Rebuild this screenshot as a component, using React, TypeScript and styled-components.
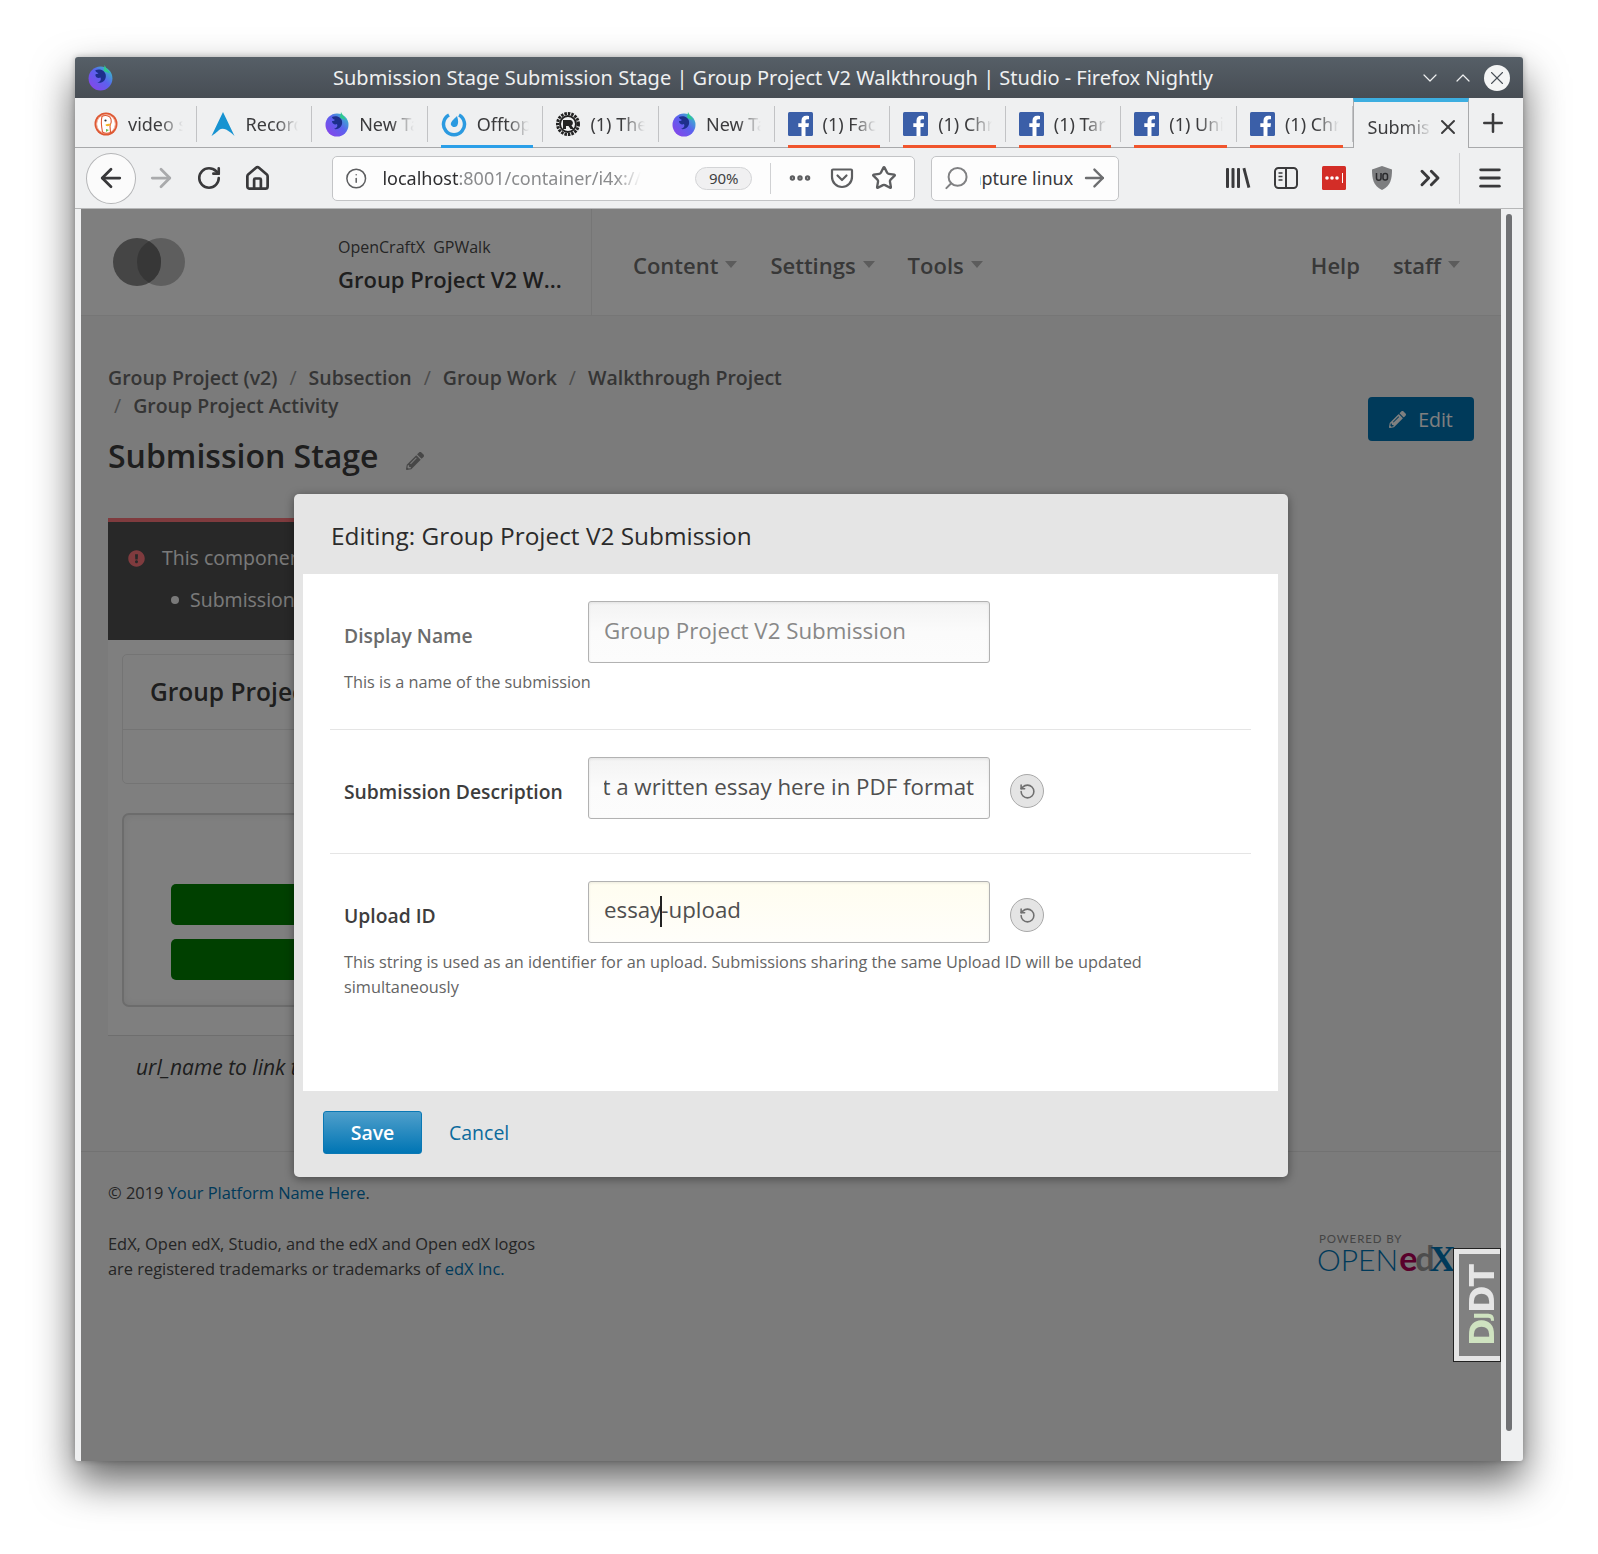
import React from 'react';
import styled, { createGlobalStyle } from 'styled-components';
import {
  ArrowLeft,
  ArrowRight,
  ChevronDown,
  ChevronUp,
  ChevronsRight,
  Ellipsis,
  House,
  Info,
  Menu,
  Plus,
  RotateCcw,
  RotateCw,
  Search,
  Star,
  X,
} from 'lucide-react';
import { FaExclamationCircle, FaPencilAlt } from 'react-icons/fa';

const GlobalStyle = createGlobalStyle`
  html, body {
    margin: 0;
    padding: 0;
    background: #fff;
  }
  * {
    box-sizing: border-box;
  }
`;

const chromeFont = `"Noto Sans", "Open Sans", sans-serif`;
const pageFont = `"Open Sans", "Noto Sans", sans-serif`;

/* ---------- browser chrome ---------- */

const Stage = styled.div`
  width: 1598px;
  height: 1554px;
  padding: 57px 75px 0;
  background: #fff;
  overflow: hidden;
`;

const Browser = styled.div`
  width: 1448px;
  height: 1404px;
  display: flex;
  flex-direction: column;
  background: #eff0f1;
  border-radius: 3px;
  box-shadow: 0 20px 42px rgba(0, 0, 0, 0.62), 0 0 6px rgba(0, 0, 0, 0.25);
  overflow: hidden;
`;

const TitleBar = styled.div`
  height: 41px;
  flex: none;
  display: flex;
  align-items: center;
  padding: 0 13px;
  background: linear-gradient(#565f67, #474d54);
  color: #eff0f1;
  font: 400 20px/41px ${chromeFont};
`;

const TitleText = styled.div`
  flex: 1;
  text-align: center;
  white-space: nowrap;
  padding-left: 20px;
`;

const WindowControl = styled.span`
  width: 33px;
  display: flex;
  justify-content: center;
  color: #eff0f1;
`;

const CloseControl = styled.span`
  width: 26px;
  height: 26px;
  margin-left: 5px;
  border-radius: 50%;
  background: #f4f5f5;
  color: #4a5057;
  display: flex;
  align-items: center;
  justify-content: center;
`;

const TabStrip = styled.div`
  height: 50px;
  flex: none;
  display: flex;
  padding-left: 6px;
  border-bottom: 1px solid #a8a9ab;
  font: 400 18px/24px ${chromeFont};
  color: #3b3b3d;
`;

const Tab = styled.div<{ $accent?: string; $last?: boolean }>`
  position: relative;
  width: 115.6px;
  flex: none;
  padding: 8px 0 5px;

  &::after {
    content: '';
    display: ${({ $accent }) => ($accent ? 'block' : 'none')};
    position: absolute;
    left: 13px;
    right: 10px;
    bottom: -1px;
    height: 3px;
    background: ${({ $accent }) => $accent};
  }
`;

const TabInner = styled.div<{ $last?: boolean }>`
  height: 36px;
  display: flex;
  align-items: center;
  gap: 10px;
  padding: 0 13px;
  border-right: ${({ $last }) => ($last ? 'none' : '1px solid #c2c3c5')};
`;

const TabLabel = styled.span`
  flex: 1;
  overflow: hidden;
  white-space: nowrap;
  -webkit-mask-image: linear-gradient(to right, #000 58%, transparent 100%);
  mask-image: linear-gradient(to right, #000 58%, transparent 100%);
`;

const ActiveTab = styled.div`
  width: 116px;
  height: 50px;
  flex: none;
  margin-left: 0;
  display: flex;
  align-items: center;
  gap: 4px;
  padding: 3px 8px 0 14px;
  border-top: 4px solid #3daee0;
  border-left: 1px solid #a8a9ab;
  border-right: 1px solid #a8a9ab;
  background: #eff0f1;
`;

const NewTab = styled.div`
  flex: 1;
  display: flex;
  align-items: center;
  justify-content: center;
  padding-right: 6px;
  color: #3b3b3d;
`;

const Toolbar = styled.div`
  height: 61px;
  flex: none;
  display: flex;
  align-items: center;
  padding-left: 11px;
  border-bottom: 1px solid #b6b7b8;
  color: #39393b;
`;

const BackButton = styled.div`
  width: 50px;
  height: 51px;
  margin-right: 1px;
  border-radius: 50%;
  border: 1px solid #b4b5b7;
  background: #fbfbfb;
  display: flex;
  align-items: center;
  justify-content: center;
`;

const ToolButton = styled.div<{ $muted?: boolean }>`
  width: 48px;
  flex: none;
  display: flex;
  align-items: center;
  justify-content: center;
  color: ${({ $muted }) => ($muted ? '#a9aaac' : 'inherit')};
`;

const UrlBar = styled.div`
  width: 583px;
  height: 45px;
  margin-left: 51px;
  padding: 0 9px 0 12px;
  display: flex;
  align-items: center;
  background: #fdfdfd;
  border: 1px solid #c3c4c6;
  border-radius: 5px;
  font: 400 18px/24px ${chromeFont};
  color: #8a8b8d;
`;

const UrlText = styled.div`
  width: 266px;
  margin-left: 15px;
  overflow: hidden;
  white-space: nowrap;
  -webkit-mask-image: linear-gradient(to right, #000 90%, transparent 100%);
  mask-image: linear-gradient(to right, #000 90%, transparent 100%);

  b {
    font-weight: 400;
    color: #2e2e30;
  }
`;

const ZoomPill = styled.span`
  width: 58px;
  height: 23px;
  margin-left: 54px;
  border: 1px solid #d3d4d6;
  border-radius: 12px;
  background: #f0f0f1;
  color: #3f3f41;
  font-size: 15px;
  line-height: 21px;
  text-align: center;
`;

const BarDivider = styled.span`
  width: 1px;
  height: 31px;
  margin: 0 8px 0 18px;
  background: #d0d1d3;
`;

const UrlAction = styled.span`
  width: 42px;
  flex: none;
  display: flex;
  align-items: center;
  justify-content: center;
  color: #5d5e60;
`;

const SearchBar = styled.div`
  width: 188px;
  height: 45px;
  margin-left: 16px;
  padding: 0 9px 0 11px;
  display: flex;
  align-items: center;
  background: #fdfdfd;
  border: 1px solid #c3c4c6;
  border-radius: 5px;
  font: 400 18px/24px ${chromeFont};
  color: #39393b;
`;

const SearchText = styled.div`
  width: 97px;
  margin-left: 10px;
  overflow: hidden;
  white-space: nowrap;
  display: flex;
  justify-content: flex-end;
`;

const ToolGroup = styled.div`
  margin-left: 95px;
  display: flex;
  align-items: center;
`;

const MenuButton = styled.div`
  width: 60px;
  height: 51px;
  margin-left: 5px;
  border-left: 1px solid #cfd0d2;
  display: flex;
  align-items: center;
  justify-content: center;
`;

const ContentRow = styled.div`
  flex: 1;
  min-height: 0;
  display: flex;
  padding: 0 6px;
`;

const Viewport = styled.div`
  position: relative;
  width: 1420px;
  height: 100%;
  flex: none;
  overflow: hidden;
  background: #f6f6f6;
`;

const ScrollTrack = styled.div`
  flex: 1;
  padding: 5px 5px 30px;
`;

const ScrollThumb = styled.div`
  height: 100%;
  border-radius: 3px;
  background: #707174;
`;

/* ---------- studio page, beneath the scrim ---------- */

const PageHeader = styled.header`
  height: 107px;
  display: flex;
  background: #ffffff;
  border-bottom: 1px solid #ececec;
  font-family: ${pageFont};
`;

const Brand = styled.div`
  width: 511px;
  flex: none;
  display: flex;
  align-items: center;
  padding: 0 0 0 32px;
  border-right: 1px solid #ececec;
`;

const CourseInfo = styled.div`
  margin-left: 153px;
  padding-top: 5px;
`;

const CourseOrg = styled.div`
  font-size: 16px;
  line-height: 22px;
  color: #4a4a4a;
`;

const CourseName = styled.div`
  margin-top: 6px;
  font-size: 22px;
  line-height: 30px;
  font-weight: 600;
  color: #3c3c3c;
  white-space: nowrap;
`;

const NavBar = styled.nav`
  flex: 1;
  display: flex;
  align-items: center;
  gap: 33px;
  padding: 6px 41px 0 41px;
  color: #707070;
  font-size: 22px;
  font-weight: 600;
`;

const NavItem = styled.span<{ $pushed?: boolean }>`
  display: flex;
  align-items: center;
  gap: 7px;
  margin-left: ${({ $pushed }) => ($pushed ? 'auto' : '0')};
`;

const Caret = styled.i`
  width: 0;
  height: 0;
  margin-top: -2px;
  border-left: 6px solid transparent;
  border-right: 6px solid transparent;
  border-top: 7px solid #b8b8b8;
`;

const PageBody = styled.main`
  height: 835px;
  padding: 48px 27px 0;
  font-family: ${pageFont};
`;

const TitleRow = styled.div`
  display: flex;
  justify-content: space-between;
  align-items: flex-start;
`;

const Crumbs = styled.div`
  width: 700px;
  font-size: 19.5px;
  line-height: 28px;
  font-weight: 600;
  color: #6a6a6a;
`;

const CrumbSlash = styled.span`
  margin: 0 12px;
  font-weight: 400;
  color: #999;
`;

const CrumbLead = styled.span`
  margin: 0 12px 0 6px;
  font-weight: 400;
  color: #999;
`;

const PageTitle = styled.h1`
  margin: 14px 0 0;
  display: flex;
  align-items: center;
  gap: 27px;
  font-size: 32px;
  line-height: 44px;
  font-weight: 600;
  color: #3c3c3c;

  svg {
    margin-top: 9px;
    color: #8f8f8f;
  }
`;

const EditButton = styled.div`
  width: 106px;
  height: 44px;
  margin-top: 33px;
  display: flex;
  align-items: center;
  justify-content: center;
  gap: 12px;
  border-radius: 4px;
  background: #0075b4;
  color: #fff;
  font-size: 19.5px;
`;

const Column = styled.div`
  width: 1130px;
  margin-top: 40px;
`;

const Alert = styled.div`
  height: 122px;
  padding: 20px 20px 0;
  border-top: 4px solid #ff767c;
  background: #505050;
  color: #f5f5f5;
  font-size: 19.5px;
  line-height: 32px;
`;

const AlertLine = styled.div`
  display: flex;
  align-items: center;
  gap: 17px;
  color: #ff767c;

  span {
    color: #f5f5f5;
  }
`;

const AlertItem = styled.div`
  display: flex;
  align-items: center;
  gap: 11px;
  margin: 10px 0 0 43px;

  &::before {
    content: '';
    width: 8px;
    height: 8px;
    border-radius: 50%;
    background: #f5f5f5;
  }
`;

const Block = styled.div`
  padding: 14px 14px 0;
  background: #fff;
  height: 396px;
  border-bottom: 1px solid #ddd;
`;

const Card = styled.div`
  height: 130px;
  border: 1px solid #e8e8e8;
  border-radius: 5px;
`;

const CardHead = styled.div`
  height: 75px;
  padding-left: 27px;
  border-bottom: 1px solid #e8e8e8;
  font-size: 24.5px;
  line-height: 74px;
  font-weight: 600;
  color: #3c3c3c;
`;

const ActionBox = styled.div`
  height: 194px;
  margin-top: 29px;
  padding: 69px 47px 0;
  border: 2px solid #d8d8d8;
  border-radius: 7px;
  box-shadow: inset 0 0 8px rgba(0, 0, 0, 0.08);
`;

const GreenButton = styled.div`
  height: 41px;
  margin-bottom: 14px;
  border-radius: 5px;
  background: #008000;
  color: #fff;
  font-size: 19.5px;
  font-weight: 600;
  line-height: 40px;
  text-align: center;
`;

const UrlNote = styled.div`
  padding: 15px 0 0 28px;
  font-size: 21px;
  line-height: 32px;
  font-style: italic;
  color: #3c3c3c;
`;

const PageFooter = styled.footer`
  display: flex;
  justify-content: space-between;
  padding: 28px 34px 0 27px;
  background: #f6f6f6;
  border-top: 1px solid #e4e4e4;
  font-family: ${pageFont};
  font-size: 16.4px;
  line-height: 25px;
  color: #4a4a4a;

  a {
    color: #0075b4;
    text-decoration: none;
  }
`;

const FooterNote = styled.p`
  margin: 0 0 26px;
`;

const PoweredLogo = styled.div`
  width: 150px;
  margin-top: 53px;
`;

const PoweredBy = styled.div`
  margin-left: 2px;
  font: 400 11.5px/12px Lato, sans-serif;
  letter-spacing: 0.9px;
  color: #8a8a8a;
`;

const LogoWord = styled.div`
  display: flex;
  align-items: baseline;
  height: 26px;
  font: 300 30px/26px Lato, sans-serif;
  color: #0075b4;
  white-space: nowrap;
`;

const LogoE = styled.span`
  margin-left: 1px;
  font-weight: 700;
  font-size: 34px;
  color: #b20056;
`;

const LogoD = styled.span`
  margin-left: -2px;
  font-weight: 700;
  font-size: 34px;
  color: #9a9a9a;
`;

const LogoX = styled.span`
  margin-left: -5px;
  font-family: 'Liberation Serif', serif;
  font-weight: 700;
  font-size: 36px;
  color: #0075b4;
`;

const Scrim = styled.div`
  position: absolute;
  inset: 0;
  background: rgba(0, 0, 0, 0.5);
`;

const DebugHandle = styled.div`
  position: absolute;
  top: 1039px;
  right: 0;
  width: 48px;
  height: 114px;
  padding: 5px 0 5px 5px;
  display: flex;
  align-items: center;
  justify-content: center;
  outline: 1px solid #222;
  outline-offset: -1px;
  border-style: solid;
  border-color: #e5e5e5;
  border-width: 6px 0 6px 6px;
  background: #808080;
  color: #e5e5e5;
  font: 700 33px/1 "DejaVu Sans", sans-serif;
  letter-spacing: -1px;
`;

const DebugText = styled.span`
  writing-mode: vertical-rl;
  transform: rotate(180deg);
  white-space: nowrap;

  em {
    font-style: normal;
    color: #cfe3c0;
  }
  small {
    font-size: 0.62em;
  }
`;

/* ---------- modal ---------- */

const Modal = styled.section`
  position: absolute;
  top: 285px;
  left: 213px;
  width: 994px;
  height: 683px;
  display: flex;
  flex-direction: column;
  border-radius: 5px;
  background: #e5e5e5;
  box-shadow: 0 2px 10px rgba(0, 0, 0, 0.4);
  font-family: ${pageFont};
`;

const ModalTitle = styled.h2`
  height: 80px;
  flex: none;
  margin: 0;
  padding-left: 37px;
  font-size: 24.4px;
  font-weight: 400;
  line-height: 84px;
  color: #2b2b2b;
`;

const ModalBody = styled.div`
  flex: 1;
  margin: 0 10px 0 9px;
  padding: 0 27px;
  background: #fff;
`;

const Setting = styled.div<{ $last?: boolean }>`
  padding: 27px 0 ${({ $last }) => ($last ? '0' : '34px')};
  border-bottom: ${({ $last }) => ($last ? 'none' : '1px solid #e5e5e5')};
`;

const SettingRow = styled.div`
  display: flex;
  align-items: center;
`;

const SettingLabel = styled.label<{ $modified?: boolean }>`
  width: 258px;
  flex: none;
  padding: 6px 0 0 14px;
  font-size: 19.3px;
  font-weight: 600;
  color: ${({ $modified }) => ($modified ? '#3d3d3d' : '#6b6b6b')};
`;

const Field = styled.div<{ $tone?: 'idle' | 'edited' | 'focus' }>`
  width: 402px;
  height: 62px;
  flex: none;
  padding: 0 15px 3px 15px;
  display: flex;
  align-items: center;
  border: 1px solid #b2b2b2;
  border-radius: 3px;
  font-size: 22.3px;
  white-space: nowrap;
  color: ${({ $tone }) => ($tone === 'idle' ? '#888' : '#4f4f4f')};
  background: ${({ $tone }) =>
    $tone === 'focus'
      ? 'linear-gradient(#fffdf0, #fffefa)'
      : 'linear-gradient(#f3f3f3, #fbfbfb 50%, #fcfcfc)'};
  box-shadow: inset 0 1px 3px rgba(0, 0, 0, 0.08);
`;

const ScrolledValue = styled.div`
  flex: 1;
  overflow: hidden;
  display: flex;
  justify-content: flex-end;
`;

const TextCaret = styled.i`
  display: inline-block;
  width: 2px;
  height: 31px;
  margin: 0 -1px;
  vertical-align: middle;
  background: #222;
`;

const ResetButton = styled.div`
  width: 34px;
  height: 34px;
  margin: 6px 0 0 20px;
  border: 1px solid #a9a9a9;
  border-radius: 50%;
  background: #e4e4e4;
  color: #6f6f6f;
  display: flex;
  align-items: center;
  justify-content: center;
`;

const HelpText = styled.div`
  margin-top: 7px;
  padding: 0 60px 0 14px;
  font-size: 16.3px;
  line-height: 25px;
  color: #646464;
`;

const ModalActions = styled.div`
  height: 86px;
  flex: none;
  display: flex;
  align-items: flex-start;
  padding: 20px 0 0 29px;
  font-size: 19.5px;
`;

const SaveButton = styled.div`
  width: 99px;
  height: 43px;
  border: 1px solid #0a78b4;
  border-radius: 3px;
  background: linear-gradient(#4f9fcb, #0075b4);
  color: #fff;
  font-weight: 600;
  line-height: 41px;
  text-align: center;
`;

const CancelLink = styled.a`
  margin-left: 27px;
  line-height: 43px;
  color: #0b6a9c;
`;

/* ---------- drawn icons ---------- */

const NightlyIcon = ({ size = 24 }: { size?: number }) => (
  <svg width={size} height={size + 2} viewBox="0 0 24 26">
    <defs>
      <linearGradient id="nightly" x1="0" y1="1" x2="1" y2="0">
        <stop offset="0" stopColor="#8f3fe8" />
        <stop offset="0.55" stopColor="#5a62ee" />
        <stop offset="1" stopColor="#2fd3c0" />
      </linearGradient>
    </defs>
    <ellipse cx="12" cy="14" rx="11.5" ry="11.5" fill="url(#nightly)" />
    <path d="M16 1c1 3 4 5 5 8l-6-2z" fill="#2fc98e" />
    <path d="M7 6c4-2 9 0 10 4 1 5-3 9-8 8 3-1 4-3 3-5-2 1-5 0-5-3 1 0 2 0 3-1-2-1-3-2-3-3z" fill="#1d2f8c" />
  </svg>
);

const DuckIcon = () => (
  <svg width="24" height="24" viewBox="0 0 24 24">
    <circle cx="12" cy="12" r="11.5" fill="#de5833" />
    <circle cx="12" cy="12" r="9.4" fill="#fff" stroke="#f3a78f" strokeWidth="1" />
    <path d="M8 4.5c3-2 8-1 9 2.5 1 3 0 5-1 7l.5 6.5c-2.500 1-5.500 1-8-.5-1-5-2-10-.5-15.500z" fill="#fff" stroke="#de5833" strokeWidth="1.100" />
    <path d="M11.500 12.500c2-1 4-1 5.500-.5-.5 1.500-2.500 2.500-5 2z" fill="#f4b52a" />
    <path d="M12 17l3 1-3 2z" fill="#67bd4a" />
    <circle cx="11.500" cy="8.500" r="1.100" fill="#333" />
  </svg>
);

const ArcIcon = () => (
  <svg width="26" height="26" viewBox="0 0 26 26">
    <path d="M13 1l11.500 24c-4-4-7.500-6-8.500-6.500-2.500-1-5-1-7 .5-1.500 1.500-5.500 5-7.500 6z" fill="#1793d1" />
  </svg>
);

const MattermostIcon = () => (
  <svg width="26" height="26" viewBox="0 0 26 26" fill="none">
    <path d="M8 4a10.500 10.500 0 1 0 10 0" stroke="#2b9ae0" strokeWidth="3.500" />
    <path d="M16 5c1 3 2 7 0 10-2 2-5 1-6-1-1-3 3-6 6-9z" fill="#2b9ae0" />
  </svg>
);

const RustIcon = () => (
  <svg width="24" height="24" viewBox="0 0 24 24">
    <circle cx="12" cy="12" r="10.500" fill="none" stroke="#222" strokeWidth="3" strokeDasharray="2.500 1" />
    <circle cx="12" cy="12" r="8" fill="none" stroke="#222" strokeWidth="2" />
    <path d="M7 8h7.500a3 3 0 0 1 1 5.500L18 17h-3.500l-2-3H10v3H7z" fill="#222" />
  </svg>
);

const FacebookIcon = () => (
  <svg width="25" height="24" viewBox="0 0 25 24">
    <rect width="25" height="24" rx="1.500" fill="#3b5fa8" />
    <path d="M17.500 24v-9h3l.5-3.700h-3.500V9c0-1 .4-1.800 1.900-1.800H21V3.900c-.4 0-1.500-.2-2.800-.2-2.800 0-4.700 1.700-4.700 4.800v2.800h-3.200V15h3.200v9z" fill="#fff" />
  </svg>
);

const PocketIcon = () => (
  <svg width="24" height="24" viewBox="0 0 24 24" fill="none" stroke="#5d5e60" strokeWidth="2.200">
    <path d="M3 3.500h18a1 1 0 0 1 1 1V11a10 10 0 0 1-20 0V4.500a1 1 0 0 1 1-1z" />
    <path d="M7.500 9.500l4.500 4.500 4.500-4.500" strokeLinecap="round" strokeLinejoin="round" />
  </svg>
);

const LibraryIcon = () => (
  <svg width="26" height="24" viewBox="0 0 26 24" fill="#3a3a3c">
    <rect x="1" y="2" width="3" height="20" rx="1" />
    <rect x="6.500" y="2" width="3" height="20" rx="1" />
    <rect x="12" y="2" width="3" height="20" rx="1" />
    <path d="M17.500 2.500l2.800-.8 5 19.500-2.800.8z" />
  </svg>
);

const SidebarIcon = () => (
  <svg width="24" height="24" viewBox="0 0 24 24" fill="none" stroke="#3a3a3c" strokeWidth="2">
    <rect x="1" y="2" width="22" height="20" rx="3.500" />
    <path d="M12 2v20" />
    <path d="M4.500 7h4M4.500 10.500h4M4.500 14h4" strokeWidth="1.500" />
  </svg>
);

const PasswordIcon = () => (
  <svg width="24" height="24" viewBox="0 0 24 24">
    <rect width="24" height="24" rx="1.500" fill="#d32d27" />
    <circle cx="5" cy="12" r="1.800" fill="#fff" />
    <circle cx="10" cy="12" r="1.800" fill="#fff" />
    <circle cx="15" cy="12" r="1.800" fill="#fff" />
    <rect x="20" y="7" width="1" height="10" fill="#fff" />
  </svg>
);

const ShieldIcon = () => (
  <svg width="22" height="26" viewBox="0 0 22 26">
    <path d="M11 1l10 3.500c0 9-1 16-10 20.500C2 20.500 1 13.500 1 4.500z" fill="#7d7e80" />
    <path d="M5.500 8v5a2 2 0 0 0 4.500 0V8" fill="none" stroke="#2a2a2c" strokeWidth="1.500" />
    <rect x="12" y="8.500" width="4.500" height="6.500" rx="2" fill="none" stroke="#2a2a2c" strokeWidth="1.500" />
  </svg>
);

const StudioLogo = () => (
  <svg width="72" height="48" viewBox="0 0 72 48">
    <circle cx="48" cy="24" r="24" fill="#bdbdbd" />
    <circle cx="24" cy="24" r="24" fill="#8b8b8b" />
    <path d="M36 3.200a24 24 0 0 1 0 41.600a24 24 0 0 1 0-41.600z" fill="#6f6f6f" />
  </svg>
);

const tabs = [
  { icon: <DuckIcon />, label: 'video s' },
  { icon: <ArcIcon />, label: 'Record' },
  { icon: <NightlyIcon />, label: 'New Ta' },
  { icon: <MattermostIcon />, label: 'Offtop', accent: '#2b9fe8' },
  { icon: <RustIcon />, label: '(1) The' },
  { icon: <NightlyIcon />, label: 'New Ta' },
  { icon: <FacebookIcon />, label: '(1) Fac', accent: '#f0552d' },
  { icon: <FacebookIcon />, label: '(1) Chr', accent: '#f0552d' },
  { icon: <FacebookIcon />, label: '(1) Tar', accent: '#f0552d' },
  { icon: <FacebookIcon />, label: '(1) Uni', accent: '#f0552d' },
  { icon: <FacebookIcon />, label: '(1) Chr', accent: '#f0552d' },
];

const App = () => {
  return (
    <Stage>
      <GlobalStyle />
      <Browser>
        <TitleBar>
          <NightlyIcon size={25} />
          <TitleText>
            Submission Stage Submission Stage | Group Project V2 Walkthrough | Studio - Firefox Nightly
          </TitleText>
          <WindowControl>
            <ChevronDown size={24} strokeWidth={1.2} />
          </WindowControl>
          <WindowControl>
            <ChevronUp size={24} strokeWidth={1.2} />
          </WindowControl>
          <CloseControl>
            <X size={22} strokeWidth={1.2} />
          </CloseControl>
        </TitleBar>

        <TabStrip>
          {tabs.map((tab, i) => (
            <Tab key={i} $accent={tab.accent}>
              <TabInner>
                {tab.icon}
                <TabLabel>{tab.label}</TabLabel>
              </TabInner>
            </Tab>
          ))}
          <ActiveTab>
            <TabLabel>Submis</TabLabel>
            <X size={24} strokeWidth={2} />
          </ActiveTab>
          <NewTab>
            <Plus size={30} strokeWidth={2} />
          </NewTab>
        </TabStrip>

        <Toolbar>
          <BackButton>
            <ArrowLeft size={30} strokeWidth={2.2} />
          </BackButton>
          <ToolButton $muted>
            <ArrowRight size={30} strokeWidth={2.2} />
          </ToolButton>
          <ToolButton>
            <RotateCw size={26} strokeWidth={2.4} />
          </ToolButton>
          <ToolButton>
            <House size={27} strokeWidth={2.4} />
          </ToolButton>
          <UrlBar>
            <Info size={23} strokeWidth={1.6} color="#5d5e60" />
            <UrlText>
              <b>localhost</b>:8001/container/i4x://(
            </UrlText>
            <ZoomPill>90%</ZoomPill>
            <BarDivider />
            <UrlAction>
              <Ellipsis size={26} strokeWidth={3} />
            </UrlAction>
            <UrlAction>
              <PocketIcon />
            </UrlAction>
            <UrlAction>
              <Star size={26} strokeWidth={2.2} />
            </UrlAction>
          </UrlBar>
          <SearchBar>
            <Search size={28} strokeWidth={1.8} color="#808183" style={{ transform: 'scaleX(-1)' }} />
            <SearchText>apture linux</SearchText>
            <ArrowRight size={30} strokeWidth={2} color="#6d6e70" style={{ marginLeft: 7 }} />
          </SearchBar>
          <ToolGroup>
            <ToolButton>
              <LibraryIcon />
            </ToolButton>
            <ToolButton>
              <SidebarIcon />
            </ToolButton>
            <ToolButton>
              <PasswordIcon />
            </ToolButton>
            <ToolButton>
              <ShieldIcon />
            </ToolButton>
            <ToolButton>
              <ChevronsRight size={32} strokeWidth={2.2} />
            </ToolButton>
            <MenuButton>
              <Menu size={28} strokeWidth={2.4} />
            </MenuButton>
          </ToolGroup>
        </Toolbar>

        <ContentRow>
          <Viewport>
            <PageHeader>
              <Brand>
                <StudioLogo />
                <CourseInfo>
                  <CourseOrg>OpenCraftX&nbsp; GPWalk</CourseOrg>
                  <CourseName>Group Project V2 W...</CourseName>
                </CourseInfo>
              </Brand>
              <NavBar>
                <NavItem>
                  Content <Caret />
                </NavItem>
                <NavItem>
                  Settings <Caret />
                </NavItem>
                <NavItem>
                  Tools <Caret />
                </NavItem>
                <NavItem $pushed>Help</NavItem>
                <NavItem>
                  staff <Caret />
                </NavItem>
              </NavBar>
            </PageHeader>

            <PageBody>
              <TitleRow>
                <div>
                  <Crumbs>
                    Group Project (v2)
                    <CrumbSlash>/</CrumbSlash>
                    Subsection
                    <CrumbSlash>/</CrumbSlash>
                    Group Work
                    <CrumbSlash>/</CrumbSlash>
                    Walkthrough Project
                    <br />
                    <CrumbLead>/</CrumbLead>
                    Group Project Activity
                  </Crumbs>
                  <PageTitle>
                    Submission Stage
                    <FaPencilAlt size={18} />
                  </PageTitle>
                </div>
                <EditButton>
                  <FaPencilAlt size={17} />
                  Edit
                </EditButton>
              </TitleRow>

              <Column>
                <Alert>
                  <AlertLine>
                    <FaExclamationCircle size={17} />
                    <span>This component has validation issues.</span>
                  </AlertLine>
                  <AlertItem>Submission</AlertItem>
                </Alert>
                <Block>
                  <Card>
                    <CardHead>Group Project</CardHead>
                  </Card>
                  <ActionBox>
                    <GreenButton>Hide</GreenButton>
                    <GreenButton>Project Navigator</GreenButton>
                  </ActionBox>
                </Block>
                <UrlNote>url_name to link to this stage</UrlNote>
              </Column>
            </PageBody>

            <PageFooter>
              <div>
                <FooterNote>
                  © 2019 <a>Your Platform Name Here</a>.
                </FooterNote>
                <FooterNote>
                  EdX, Open edX, Studio, and the edX and Open edX logos
                  <br />
                  are registered trademarks or trademarks of <a>edX Inc.</a>
                </FooterNote>
              </div>
              <PoweredLogo>
                <PoweredBy>POWERED BY</PoweredBy>
                <LogoWord>
                  OPEN
                  <LogoE>e</LogoE>
                  <LogoD>d</LogoD>
                  <LogoX>X</LogoX>
                </LogoWord>
              </PoweredLogo>
            </PageFooter>

            <Scrim />

            <DebugHandle>
              <DebugText>
                <em>
                  D<small>J</small>
                </em>
                DT
              </DebugText>
            </DebugHandle>

            <Modal>
              <ModalTitle>Editing: Group Project V2 Submission</ModalTitle>
              <ModalBody>
                <Setting>
                  <SettingRow>
                    <SettingLabel>Display Name</SettingLabel>
                    <Field $tone="idle">Group Project V2 Submission</Field>
                  </SettingRow>
                  <HelpText>This is a name of the submission</HelpText>
                </Setting>
                <Setting>
                  <SettingRow>
                    <SettingLabel $modified>Submission Description</SettingLabel>
                    <Field $tone="edited">
                      <ScrolledValue>Submit a written essay here in PDF format</ScrolledValue>
                    </Field>
                    <ResetButton>
                      <RotateCcw size={17} strokeWidth={2.2} />
                    </ResetButton>
                  </SettingRow>
                </Setting>
                <Setting $last>
                  <SettingRow>
                    <SettingLabel $modified>Upload ID</SettingLabel>
                    <Field $tone="focus">
                      <span>
                        essay
                        <TextCaret />
                        -upload
                      </span>
                    </Field>
                    <ResetButton>
                      <RotateCcw size={17} strokeWidth={2.2} />
                    </ResetButton>
                  </SettingRow>
                  <HelpText>
                    This string is used as an identifier for an upload. Submissions sharing the same Upload ID will be
                    updated simultaneously
                  </HelpText>
                </Setting>
              </ModalBody>
              <ModalActions>
                <SaveButton>Save</SaveButton>
                <CancelLink>Cancel</CancelLink>
              </ModalActions>
            </Modal>
          </Viewport>
          <ScrollTrack>
            <ScrollThumb />
          </ScrollTrack>
        </ContentRow>
      </Browser>
    </Stage>
  );
};

export default App;
